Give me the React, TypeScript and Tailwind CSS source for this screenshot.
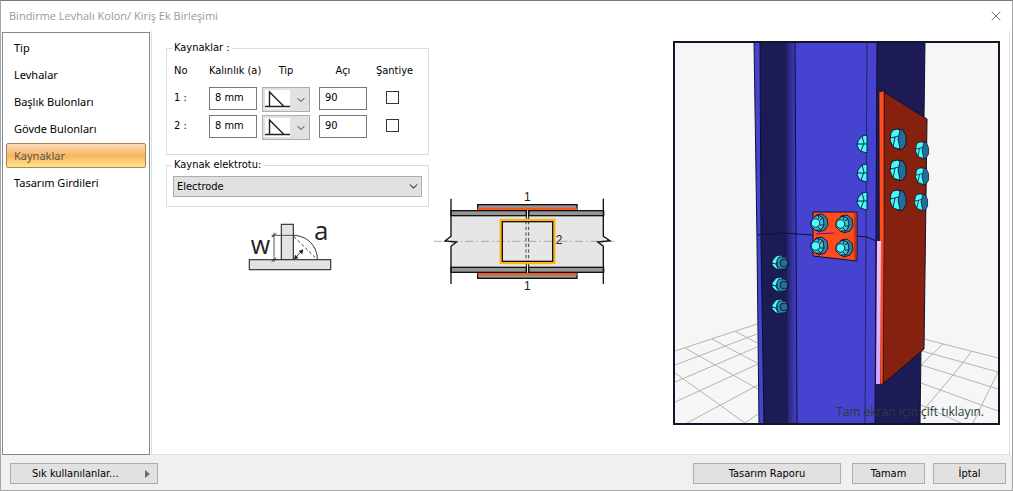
import { useState } from 'react';
import { ChevronDown, X } from 'lucide-react';

const pages = [
  'Tip',
  'Levhalar',
  'Başlık Bulonları',
  'Gövde Bulonları',
  'Kaynaklar',
  'Tasarım Girdileri',
];

const welds = [
  { no: 1, thickness: '8 mm', angle: '90' },
  { no: 2, thickness: '8 mm', angle: '90' },
];

const footerButton =
  'h-[21px] border border-[#adadad] bg-[#e1e1e1] text-center hover:bg-[#e5f1fb]';

function WeldTypeSelect({ no }: { no: number }) {
  return (
    <div className="relative h-[25px] w-12">
      <select
        aria-label={`Tip ${no}`}
        className="h-full w-full appearance-none border border-[#adadad] bg-[#e1e1e1]"
      >
        <option value="fillet" aria-label="Köşe kaynak" />
      </select>
      <svg
        viewBox="0 0 25 19"
        className="pointer-events-none absolute left-[3px] top-[3px] h-[19px] w-[25px]"
      >
        <rect width="25" height="19" fill="#fff" />
        <path d="M0 16.5H25M4.5 17V2L19 16.5" fill="none" stroke="#222" strokeWidth="1.4" />
      </svg>
      <ChevronDown
        className="pointer-events-none absolute right-[3px] top-[7px] size-3 text-[#333]"
        strokeWidth={2}
      />
    </div>
  );
}

function WeldSymbol() {
  return (
    <svg viewBox="0 0 300 210" className="h-[70px] w-[100px]" fill="none" stroke="#333">
      <rect x="124" y="43" width="36" height="106" fill="#e3e3e3" strokeWidth="3.5" />
      <rect x="28" y="149" width="244" height="30" fill="#e3e3e3" strokeWidth="3.5" />
      <path d="M102 68V155M95 76H160M95 149H112" strokeWidth="2.5" />
      <path d="M95 82L109 70M95 155L109 143" strokeWidth="3" />
      <path d="M160 76C202 77 232 108 232 149" strokeWidth="3" />
      <path d="M162 80L230 147" strokeWidth="3" strokeDasharray="9 7" />
      <path d="M164 145L187 121" strokeWidth="3" />
      <path d="M162 148L165 134L176 144ZM190 118L176 123L187 133Z" fill="#222" stroke="none" />
      <g fill="#222" stroke="none" fontFamily="'Open Sans', 'Noto Sans', sans-serif">
        <text x="32" y="132" fontSize="75">w</text>
        <text x="222" y="90" fontSize="78">a</text>
      </g>
    </svg>
  );
}

function JointSection() {
  return (
    <svg viewBox="0 0 570 345" className="h-[115px] w-[190px]" fill="none" stroke="#111">
      <rect x="63" y="76" width="458" height="186" fill="#e6e6e6" stroke="none" />
      <g fill="#969696" strokeWidth="4">
        <rect x="63" y="77" width="226" height="15" />
        <rect x="296" y="77" width="225" height="15" />
        <rect x="63" y="247" width="226" height="15" />
        <rect x="296" y="247" width="225" height="15" />
        <rect x="143" y="59" width="298" height="15" />
        <rect x="143" y="265" width="298" height="15" />
      </g>
      <path d="M143 71.5H441M143 267.5H441" stroke="#f25a1d" strokeWidth="7" />
      <path d="M12 169H562" stroke="#888" strokeWidth="2" strokeDasharray="24 9 5 9" />
      <path
        d="M63 41V154L45 168L80 171L63 184V297M520 41V154L540 167L503 171L520 184V297"
        strokeWidth="4"
      />
      <path d="M289 78V108M296 78V108M289 232V262M296 232V262" strokeWidth="3" />
      <path d="M288 108V232M296 108V232" stroke="#444" strokeWidth="3" strokeDasharray="10 7" />
      <rect x="212" y="105" width="161" height="129" stroke="#fcb90b" strokeWidth="7" />
      <rect x="217" y="110" width="151" height="119" strokeWidth="4" />
      <g
        fill="#222"
        stroke="none"
        fontSize="36"
        fontFamily="'Liberation Sans', Arial, sans-serif"
      >
        <text x="282" y="48">1</text>
        <text x="282" y="314">1</text>
        <text x="377" y="177">2</text>
      </g>
    </svg>
  );
}

type BoltProps = { x: number; y: number };

function WebBolt({ x, y }: BoltProps) {
  return (
    <g transform={`translate(${x} ${y})`} strokeWidth="0.9">
      <path d="M-3-8L3-9L8-5L9 2L6 7L0 9L-5 6Z" fill="#2b87a8" />
      <path d="M-6-5L-1-8L4-5L5 2L2 7L-4 7L-8 3L-8-2Z" fill="#3fc9d4" />
      <path d="M-1-8L0-4M4-5L1-3M5 2L1 2M2 7L-1 4" fill="none" />
      <circle cx="-3.5" cy="0" r="4.3" fill="#4dfcfc" />
    </g>
  );
}

function FlangeNut({ x, y }: BoltProps) {
  return (
    <g transform={`translate(${x} ${y})`} strokeWidth="0.9">
      <path d="M-8-2L-4-7L1-8L4-5V5L1 7L-4 6L-8 2Z" fill="#45fbfb" />
      <path d="M-8 0L-4 1L-2-3L2-4M-4 1L-2 6" fill="none" />
      <path d="M-1-6L5-6L8-3V3L5 6H0L-3 2V-3Z" fill="#2c91ae" />
      <circle cx="4" cy="0" r="4" fill="#226f98" />
    </g>
  );
}

function BoltHead({ x, y, scale = 1 }: BoltProps & { scale?: number }) {
  return (
    <g transform={`translate(${x} ${y}) scale(${scale})`} strokeWidth="0.9">
      <path d="M0-10L5-9L8-3V5L5 10L1 11L-2 7V-5Z" fill="#226f9b" />
      <path d="M-5-9L0-10L2-8L-0 0L2 9L1 10L-5 8L-8 1L-7-6Z" fill="#45fbfb" />
      <path d="M-8-1L-3-2L0-3M-3-2L-5 8" fill="none" />
    </g>
  );
}

function HalfBolt({ x, y }: BoltProps) {
  return (
    <g transform={`translate(${x} ${y})`} strokeWidth="0.9">
      <path d="M0-9L-5-8L-9-3L-10 2L-7 7L0 9Z" fill="#45fbfb" />
      <path d="M-10 0H0M-5-8L-3-1L-6 7" fill="none" />
    </g>
  );
}

function ModelPreview() {
  return (
    <div className="relative">
      <svg viewBox="0 0 327 384" className="block h-[384px] w-[327px]" stroke="#10102c">
        <defs>
          <linearGradient id="fillet" x1="0" x2="1" y1="0" y2="0">
            <stop offset="0" stopColor="#1c1b55" />
            <stop offset="1" stopColor="#4643d1" />
          </linearGradient>
          <linearGradient id="weld" x1="0" x2="0" y1="0" y2="1">
            <stop offset="0" stopColor="#f3c4f2" />
            <stop offset="1" stopColor="#cfa4ff" />
          </linearGradient>
        </defs>
        <rect width="327" height="384" fill="#f6f6f6" stroke="none" />
        <path
          d="M2 310L84 283M2 324L84 293M2 341L84 306M2 361L85 323M14 382L85 344M72 382L85 373
             M12 307L85 348M2 332L72 382M39 298L84 322M62 290L84 302
             M251 298L325 317M249 310L325 331M248 324L325 348M248 342L325 370M248 364L288 382
             M270 303L248 324M299 310L280 334L248 372M325 331L300 382"
          fill="none"
          stroke="#b2b6b2"
        />
        <g stroke="none">
          <path d="M81 0H206L203 384H86L84 200Z" fill="#4643d1" />
          <path d="M87 0H113L116 384H91L88 200Z" fill="#1c1b55" />
          <path d="M112 0H122L124 384H115Z" fill="url(#fillet)" />
          <path d="M204 0H252L247 384H202Z" fill="#1c1b55" />
        </g>
        <path
          d="M81 0L84 200L86 384M87 0L88 200L91 384M122 0L124 384M204 0L202 384M252 0L247 384"
          fill="none"
        />
        <path d="M194 0L192 384" stroke="#24226f" />
        <path d="M84 194L110 192L140 194M184 195L194 196L203 200" fill="none" />

        <path d="M211 51L254 78L251 308L210 343Z" fill="#86210f" />
        <path d="M206 51L211 50V200L210 343H207Z" fill="#ff4b1d" strokeWidth="0.6" />
        <path d="M204 200H208L207 343H203Z" fill="url(#weld)" stroke="none" />
        <path d="M140 171H184V220L140 215Z" fill="#ff4b1d" />
        <path d="M182 172V219" stroke="#86210f" />
        <path d="M143 193L161 192" stroke="#4b17b0" />

        <HalfBolt x={194} y={103} />
        <HalfBolt x={194} y={132} />
        <HalfBolt x={194} y={160} />
        <BoltHead x={225} y={98} />
        <BoltHead x={225} y={129} />
        <BoltHead x={225} y={159} />
        <BoltHead x={249} y={109} scale={0.82} />
        <BoltHead x={249} y={135} scale={0.82} />
        <BoltHead x={248} y={161} scale={0.82} />
        <WebBolt x={146} y={182} />
        <WebBolt x={171} y={183} />
        <WebBolt x={146} y={205} />
        <WebBolt x={171} y={207} />
        <FlangeNut x={107} y={222} />
        <FlangeNut x={107} y={244} />
        <FlangeNut x={107} y={266} />
        <rect x="1" y="1" width="325" height="382" fill="none" stroke="#151529" strokeWidth="2" />
      </svg>
      <p className="absolute bottom-[5px] right-4 whitespace-nowrap font-[Open_Sans] text-[12px] leading-4 text-[#2b3b3b]">
        Tam ekran için çift tıklayın.
      </p>
    </div>
  );
}

export default function App() {
  const [page, setPage] = useState('Kaynaklar');

  return (
    <div className="flex min-h-screen flex-col border border-t-[#777] border-[#a5a5a5] bg-[#f0f0f0] font-['DejaVu_Sans_Condensed','Noto_Sans',sans-serif] text-[11px] leading-[14px] text-black">
      <header className="flex h-[30px] items-center justify-between bg-white pb-px pl-2 pr-2">
        <h1 className="font-['Open_Sans','Noto_Sans',sans-serif] text-[#999]">
          Bindirme Levhalı Kolon/ Kiriş Ek Birleşimi
        </h1>
        <button type="button" aria-label="Kapat" className="text-[#777]">
          <X className="size-4" strokeWidth={1.5} />
        </button>
      </header>

      <div className="flex flex-1 bg-white pr-[2px]">
        <nav className="ml-px mt-px flex w-[148px] shrink-0 flex-col gap-[2px] border border-[#828790] px-[3px] py-[2px] font-['Noto_Sans',sans-serif]">
          {pages.map((name) => (
            <button
              key={name}
              type="button"
              onClick={() => setPage(name)}
              className={
                name === page
                  ? 'h-[25px] rounded-[2px] border border-[#a98750] bg-linear-to-b from-[#fbdcba] via-[#f8b45c] to-[#fee48d] px-[7px] text-left text-[#555]'
                  : 'h-[25px] border border-transparent px-[7px] text-left'
              }
            >
              {name}
            </button>
          ))}
        </nav>

        <main className="ml-px flex flex-1 items-start border-x border-b border-[#dcdcdc] pb-[29px] pl-[14px] pr-[9px] pt-[10px]">
          <div className="flex w-[263px] shrink-0 flex-col gap-[3px]">
            <fieldset className="border border-[#dcdcdc] pb-[14px] pl-[7px]">
              <legend className="px-[2px] -ml-[2px]">Kaynaklar :</legend>
              <div className="mt-[9px] grid grid-cols-[35px_53px_57px_57px_36px] items-center">
                <span>No</span>
                <span className="w-12 whitespace-nowrap text-center">Kalınlık (a)</span>
                <span className="w-12 text-center">Tip</span>
                <span className="w-12 text-center">Açı</span>
                <span className="text-center">Şantiye</span>
              </div>
              <div className="mt-[9px] flex flex-col gap-[3px]">
                {welds.map((weld) => (
                  <div
                    key={weld.no}
                    className="grid grid-cols-[35px_53px_57px_57px_36px] items-start"
                  >
                    <span className="mt-1">{weld.no} :</span>
                    <input
                      aria-label={`Kalınlık ${weld.no}`}
                      defaultValue={weld.thickness}
                      className="h-[23px] w-12 border border-[#7a7a7a] bg-white pb-[2px] pl-[5px]"
                    />
                    <WeldTypeSelect no={weld.no} />
                    <input
                      aria-label={`Açı ${weld.no}`}
                      defaultValue={weld.angle}
                      className="h-[23px] w-12 border border-[#7a7a7a] bg-white pb-[2px] pl-[5px]"
                    />
                    <input
                      type="checkbox"
                      aria-label={`Şantiye ${weld.no}`}
                      className="ml-[10px] mt-1 size-[13px] appearance-none border border-[#333] bg-white checked:bg-[#333]"
                    />
                  </div>
                ))}
              </div>
            </fieldset>

            <fieldset className="border border-[#dcdcdc] px-[6px] pb-[9px]">
              <legend className="px-[2px] -ml-px">
                <label htmlFor="electrode">Kaynak elektrotu:</label>
              </legend>
              <div className="relative mt-1">
                <select
                  id="electrode"
                  className="h-[21px] w-full appearance-none border border-[#adadad] bg-[#e1e1e1] pl-[3px]"
                >
                  <option>Electrode</option>
                </select>
                <ChevronDown
                  className="pointer-events-none absolute right-[2px] top-1 size-[13px] text-[#444]"
                  strokeWidth={2}
                />
              </div>
            </fieldset>

            <div className="ml-[74px]">
              <WeldSymbol />
            </div>
          </div>

          <div className="ml-px mt-36 shrink-0">
            <JointSection />
          </div>

          <div className="ml-auto shrink-0">
            <ModelPreview />
          </div>
        </main>
      </div>

      <footer className="flex h-[35px] items-center gap-[11px] pl-[9px] pr-[6px] pt-[2px]">
        <button
          type="button"
          className={`${footerButton} flex w-[148px] items-center justify-between pl-[21px] pr-[7px]`}
        >
          Sık kullanılanlar...
          <svg viewBox="0 0 5 8" className="h-2 w-[5px]">
            <path d="M0 0L5 4L0 8Z" fill="#6d6d6d" />
          </svg>
        </button>
        <button type="button" className={`${footerButton} ml-auto w-[148px]`}>
          Tasarım Raporu
        </button>
        <button type="button" className={`${footerButton} w-[73px]`}>
          Tamam
        </button>
        <button type="button" className={`${footerButton} -ml-[3px] w-[73px]`}>
          İptal
        </button>
      </footer>
    </div>
  );
}
